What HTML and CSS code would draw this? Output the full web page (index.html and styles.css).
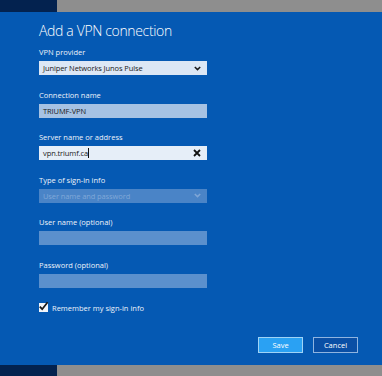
FILE: index.html
```html
<!DOCTYPE html>
<html lang="en">
<head>
    <meta charset="UTF-8">
    <title>Add a VPN connection</title>
    <link rel="stylesheet" href="styles.css">
</head>
<body>
    <div class="screen">
        <div class="strip"><div class="strip_dark"></div></div>

        <div class="panel">
            <h1 class="title">Add a VPN connection</h1>

            <div class="field">
                <div class="label">VPN provider</div>
                <div class="box box_select">
                    <span>Juniper Networks Junos Pulse</span>
                    <svg class="chev" width="7" height="5" viewBox="0 0 7 5"><polyline points="0.8,1 3.5,3.6 6.2,1" fill="none" stroke="#1a1a1a" stroke-width="1.5"/></svg>
                </div>
            </div>

            <div class="field">
                <div class="label">Connection name</div>
                <div class="box box_filled"><span>TRIUMF-VPN</span></div>
            </div>

            <div class="field">
                <div class="label">Server name or address</div>
                <div class="box box_active">
                    <span>vpn.triumf.ca<i class="caret"></i></span>
                    <svg class="clear" width="8" height="8" viewBox="0 0 8 8"><path d="M1 1L7 7M7 1L1 7" stroke="#111" stroke-width="1.8"/></svg>
                </div>
            </div>

            <div class="field">
                <div class="label">Type of sign-in info</div>
                <div class="box box_disabled">
                    <span>User name and password</span>
                    <svg class="chev" width="7" height="5" viewBox="0 0 7 5"><polyline points="0.8,1 3.5,3.6 6.2,1" fill="none" stroke="#7fa6d6" stroke-width="1.5"/></svg>
                </div>
            </div>

            <div class="field">
                <div class="label">User name (optional)</div>
                <div class="box box_empty"></div>
            </div>

            <div class="field">
                <div class="label">Password (optional)</div>
                <div class="box box_empty"></div>
            </div>

            <div class="remember">
                <div class="check">
                    <svg width="11" height="11" viewBox="0 0 11 11"><path d="M1.8 5.6L4.2 8.2L9.6 1.2" fill="none" stroke="#1a1a1a" stroke-width="1.8"/></svg>
                </div>
                <span>Remember my sign-in info</span>
            </div>

            <div class="buttons">
                <div class="btn btn_save">Save</div>
                <div class="btn btn_cancel">Cancel</div>
            </div>
        </div>

        <div class="strip"><div class="strip_dark"></div></div>
    </div>
</body>
</html>
```

FILE: styles.css
```css
body{
    margin:0;
    font-family: "Open Sans", "Liberation Sans", sans-serif;
}
.screen{
    width:382px;
    height:376px;
    display:flex;
    flex-direction:column;
    overflow:hidden;
}
.strip{
    height:12px;
    background-color:#8e8e8e;
    display:flex;
}
.strip:last-child{
    height:11px;
}
.strip_dark{
    width:57px;
    background-color:#03224f;
}
.panel{
    flex:1;
    background-color:#0559b3;
    padding:9px 24px 0 39px;
    color:#eef3fa;
}
.title{
    margin:0 0 4px 0;
    font-size:14px;
    font-weight:300;
    line-height:20px;
    letter-spacing:-0.35px;
    color:#ffffff;
}
.field{
    width:168px;
    margin-bottom:12.6px;
}
.label{
    height:14px;
    line-height:14px;
    font-size:7.5px;
    margin-bottom:2px;
}
.box{
    height:14px;
    display:flex;
    align-items:center;
    justify-content:space-between;
    padding:0 6px 0 4px;
    font-size:7.5px;
    letter-spacing:-0.1px;
    color:#1a1a1a;
}
.box_select{
    background-color:#dce7f5;
}
.box_filled{
    background-color:#a6c2e3;
}
.box_active{
    background-color:#e6eef8;
}
.box_disabled{
    background-color:#4a84c7;
    color:#80a8d8;
}
.box_empty{
    background-color:#5b90cd;
}
.caret{
    display:inline-block;
    width:1px;
    height:10px;
    background-color:#111;
    vertical-align:-2px;
}
.remember{
    display:flex;
    align-items:center;
    height:14px;
    margin-top:13px;
    font-size:7.5px;
}
.check{
    position:relative;
    width:9px;
    height:9px;
    background-color:#f2f5fa;
    margin-right:4px;
}
.check svg{
    position:absolute;
    left:-1px;
    top:-2px;
}
.buttons{
    display:flex;
    justify-content:flex-end;
    gap:10px;
    margin-top:22px;
}
.btn{
    width:43px;
    height:14px;
    line-height:14px;
    text-align:center;
    font-size:7.5px;
    color:#ffffff;
}
.btn_save{
    background-color:#2aa1f3;
    border:1px solid #9fd3f6;
}
.btn_cancel{
    background-color:#0a4fa5;
    border:1px solid #8fb4e0;
}
```
